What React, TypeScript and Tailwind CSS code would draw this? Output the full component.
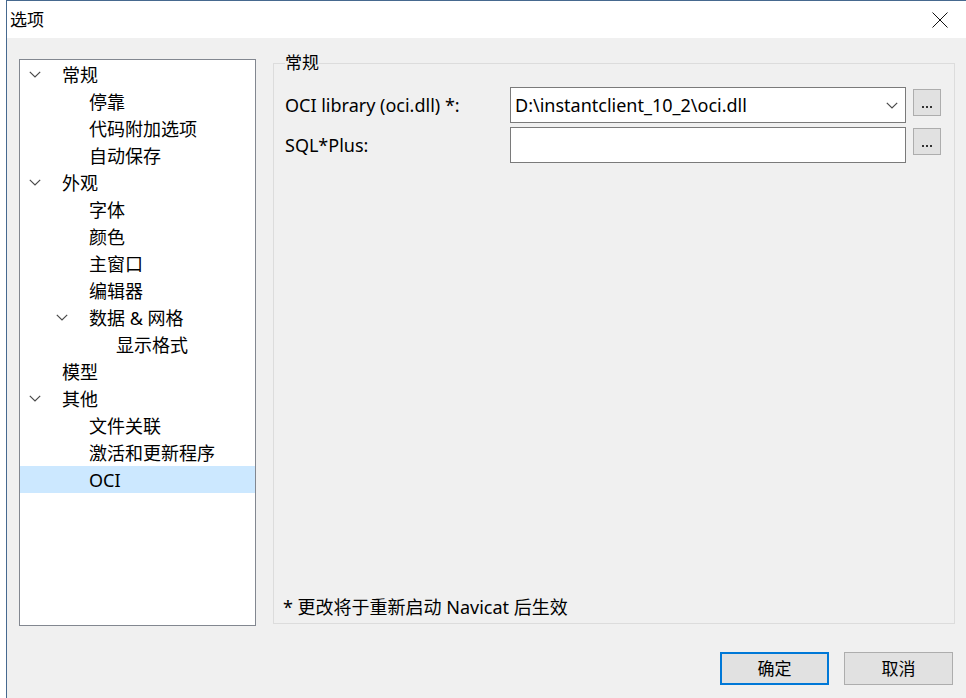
interface TreeNode {
  label: string;
  level: 0 | 1 | 2;
  expander?: boolean;
  selected?: boolean;
}

const TREE: TreeNode[] = [
  { label: '常规', level: 0, expander: true },
  { label: '停靠', level: 1 },
  { label: '代码附加选项', level: 1 },
  { label: '自动保存', level: 1 },
  { label: '外观', level: 0, expander: true },
  { label: '字体', level: 1 },
  { label: '颜色', level: 1 },
  { label: '主窗口', level: 1 },
  { label: '编辑器', level: 1 },
  { label: '数据 & 网格', level: 1, expander: true },
  { label: '显示格式', level: 2 },
  { label: '模型', level: 0 },
  { label: '其他', level: 0, expander: true },
  { label: '文件关联', level: 1 },
  { label: '激活和更新程序', level: 1 },
  { label: 'OCI', level: 1, selected: true },
];

const INDENT: Record<TreeNode['level'], string> = {
  0: 'pl-[9px]',
  1: 'pl-[36px]',
  2: 'pl-[63px]',
};

function Chevron({ className }: { className?: string }) {
  return (
    <svg width="12" height="7" viewBox="0 0 12 7" className={className}>
      <path d="M0.8 0.8 L6 6 L11.2 0.8" fill="none" stroke="#4a4a4a" strokeWidth="1.2" />
    </svg>
  );
}

function CloseGlyph() {
  return (
    <svg width="16" height="16" viewBox="0 0 16 16">
      <path d="M0.5 0.5 L15.5 15.5 M15.5 0.5 L0.5 15.5" stroke="#111" strokeWidth="1" fill="none" />
    </svg>
  );
}

function BrowseButton({ className }: { className?: string }) {
  return (
    <button className={`flex h-[27px] w-[28px] shrink-0 items-end justify-center border border-[#adadad] bg-[#e1e1e1] pb-[7px] ${className ?? ''}`}>
      <span className="flex gap-[2px]">
        <span className="h-[2px] w-[2px] bg-[#333]" />
        <span className="h-[2px] w-[2px] bg-[#333]" />
        <span className="h-[2px] w-[2px] bg-[#333]" />
      </span>
    </button>
  );
}

export default function App() {
  return (
    <div className="h-[698px] w-[966px] overflow-hidden bg-white pl-[6px] font-['Noto_Sans','Noto_Sans_CJK_SC',sans-serif] text-[18px] text-black">
      <div className="flex h-full flex-col border-l border-t border-[#46698f]">
        {/* title bar */}
        <div className="flex h-[37px] shrink-0 items-center justify-between bg-white pl-[3px] pr-[18px]">
          <span className="text-[17px] leading-none">选项</span>
          <CloseGlyph />
        </div>

        <div className="flex flex-1 flex-col bg-[#f0f0f0] pl-[12px] pr-[11px] pt-[14px]">
          <div className="flex items-start gap-[17px]">
            {/* tree */}
            <div className="mt-[7px] h-[567px] w-[237px] shrink-0 border border-[#828790] bg-white pt-[1px]">
              <ul>
                {TREE.map((n) => (
                  <li
                    key={n.label}
                    className={`flex h-[27px] items-center ${INDENT[n.level]} ${n.selected ? 'bg-[#cce8ff]' : ''}`}
                  >
                    {n.expander ? <Chevron className="shrink-0" /> : <span className="w-[12px] shrink-0" />}
                    <span className="ml-[21px] whitespace-nowrap leading-none">{n.label}</span>
                  </li>
                ))}
              </ul>
            </div>

            {/* group box */}
            <fieldset className="flex h-[572px] flex-1 flex-col border border-[#dcdcdc] pl-[11px] pr-[13px]">
              <legend className="px-0 text-[17px] leading-[22px]">常规</legend>
              <div className="mt-[13px] flex items-start">
                <span className="flex h-[36px] w-[225px] shrink-0 items-center">OCI library (oci.dll) *:</span>
                <div className="flex h-[36px] w-[396px] items-center justify-between border border-[#7a7a7a] bg-white pl-[4px] pr-[7px]">
                  <span>D:\instantclient_10_2\oci.dll</span>
                  <Chevron />
                </div>
                <BrowseButton className="ml-[7px] mt-[2px]" />
              </div>
              <div className="mt-[4px] flex items-start">
                <span className="flex h-[36px] w-[225px] shrink-0 items-center">SQL*Plus:</span>
                <div className="h-[36px] w-[396px] border border-[#7a7a7a] bg-white" />
                <BrowseButton className="ml-[7px] mt-[1px]" />
              </div>
              <div className="mt-auto -ml-[2px] mb-[3px] leading-[26px]">* 更改将于重新启动 Navicat 后生效</div>
            </fieldset>
          </div>

          <div className="mt-[26px] flex justify-end gap-[15px] pr-[2px]">
            <button className="h-[33px] w-[109px] border-2 border-[#0078d7] bg-[#e1e1e1] text-[17px]">确定</button>
            <button className="h-[33px] w-[109px] border border-[#adadad] bg-[#e1e1e1] text-[17px]">取消</button>
          </div>
        </div>
      </div>
    </div>
  );
}
